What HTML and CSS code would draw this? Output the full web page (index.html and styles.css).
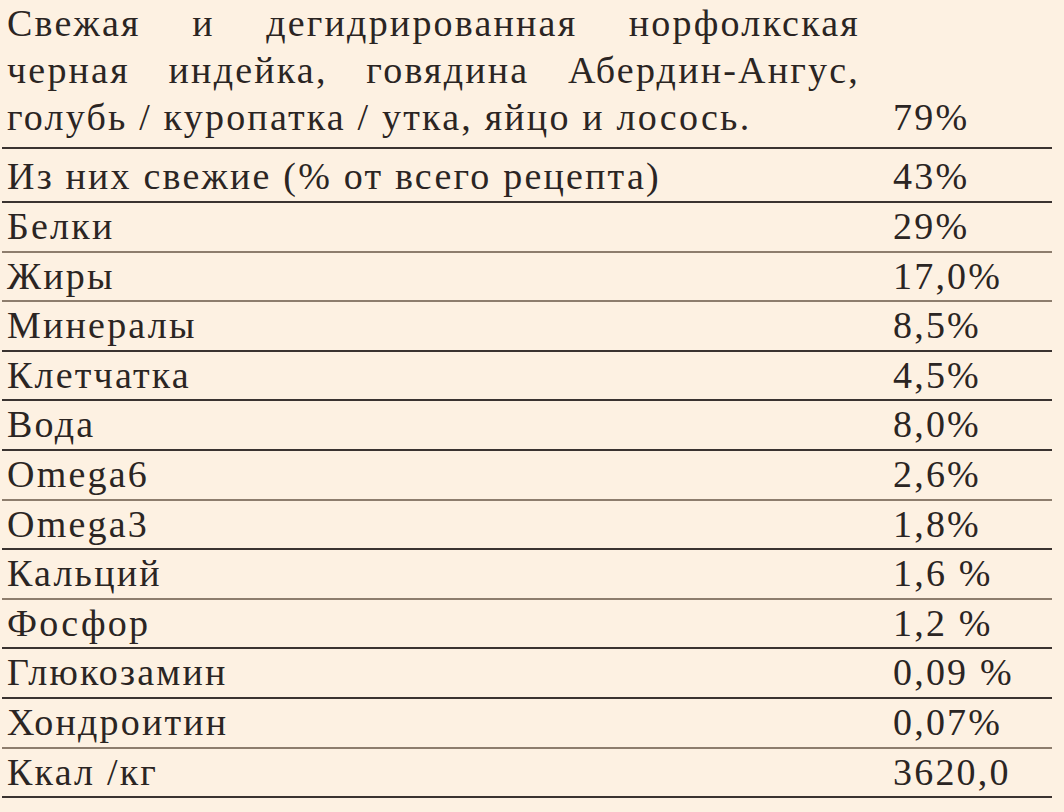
FILE: index.html
```html
<!DOCTYPE html>
<html lang="ru">
<head>
<meta charset="utf-8">
<link rel="stylesheet" href="styles.css">
</head>
<body>
<table class="comp">
  <tr class="first dark">
    <td class="name">
      <div class="ln just">Свежая и дегидрированная норфолкская</div>
      <div class="ln just">черная индейка, говядина Абердин-Ангус,</div>
      <div class="ln">голубь / куропатка / утка, яйцо и лосось.</div>
    </td>
    <td class="val">79%</td>
  </tr>
  <tr class="dark tall"><td class="name">Из них свежие (% от всего рецепта)</td><td class="val">43%</td></tr>
  <tr class="brown"><td class="name">Белки</td><td class="val">29%</td></tr>
  <tr class="brown"><td class="name">Жиры</td><td class="val">17,0%</td></tr>
  <tr class="dark"><td class="name">Минералы</td><td class="val">8,5%</td></tr>
  <tr class="dark"><td class="name">Клетчатка</td><td class="val">4,5%</td></tr>
  <tr class="dark"><td class="name">Вода</td><td class="val">8,0%</td></tr>
  <tr class="brown"><td class="name">Omega6</td><td class="val">2,6%</td></tr>
  <tr class="dark"><td class="name">Omega3</td><td class="val">1,8%</td></tr>
  <tr class="brown"><td class="name">Кальций</td><td class="val">1,6 %</td></tr>
  <tr class="dark"><td class="name">Фосфор</td><td class="val">1,2 %</td></tr>
  <tr class="dark"><td class="name">Глюкозамин</td><td class="val">0,09 %</td></tr>
  <tr class="brown"><td class="name">Хондроитин</td><td class="val">0,07%</td></tr>
  <tr class="dark"><td class="name">Ккал /кг</td><td class="val">3620,0</td></tr>
</table>
</body>
</html>
```
FILE: styles.css
```css
html, body {
  margin: 0;
  padding: 0;
  background: #fdf1e2;
}
body {
  padding: 0 0 0 2px;
  font-family: "Liberation Serif", "DejaVu Serif", serif;
  color: #2b2523;
}
.comp {
  width: 1050px;
  border-collapse: collapse;
  font-size: 38px;
  letter-spacing: 2.2px;
}
.comp td {
  padding: 0;
  height: 47.6px;
  line-height: 47.6px;
  vertical-align: bottom;
  white-space: nowrap;
}
.comp tr.tall td {
  height: 52px;
}
.comp tr.dark td { border-bottom: 2px solid #3a3330; }
.comp tr.brown td { border-bottom: 2px solid #8d7d6d; }
.comp .name {
  width: 886px;
  padding-left: 5px;
}
.comp .val {
  padding-left: 0;
}
.comp tr.first td {
  line-height: 47px;
  padding-bottom: 6px;
}
.comp .ln {
  width: 853px;
}
.comp .just {
  text-align: justify;
  text-align-last: justify;
}
```
